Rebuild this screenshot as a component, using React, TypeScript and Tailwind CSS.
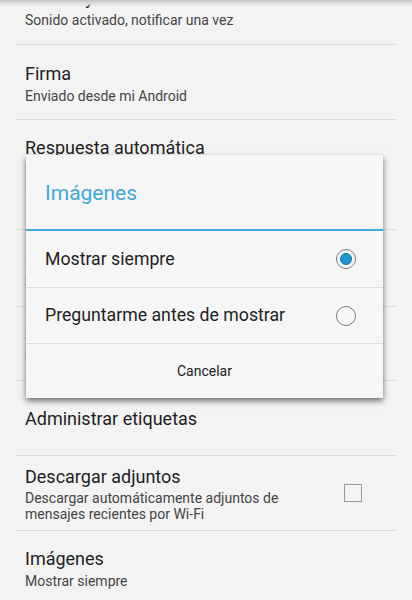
import React from "react";

const font = { fontFamily: "Roboto, 'Noto Sans', sans-serif" };

function Divider() {
  return <div className="mx-[16px] h-px bg-[#dcdcdc]" />;
}

function Row({ title, sub, right, h = 74, pt = 3 }: { title: string; sub?: string[]; right?: React.ReactNode; h?: number; pt?: number }) {
  return (
    <div className="flex items-center pl-[25px] pr-[49px]" style={{ height: h, paddingTop: pt }}>
      <div className="flex-1 flex flex-col">
        <div className="text-[18px] leading-[24px] text-[#1e1e1e]">{title}</div>
        {sub && sub.length === 1 && <div className="text-[14px] leading-[20px] text-[#444]">{sub[0]}</div>}
        {sub && sub.length > 1 && (
          <div className="text-[14px] leading-[16px] text-[#444] mt-[1px]">
            {sub.map(s => (
              <div key={s}>{s}</div>
            ))}
          </div>
        )}
      </div>
      {right}
    </div>
  );
}

function Radio({ on }: { on: boolean }) {
  return (
    <div className="w-[20px] h-[20px] rounded-full border border-[#7a7a7a] bg-[#f7f7f7] flex items-center justify-center">
      {on && <div className="w-[12px] h-[12px] rounded-full bg-[#1f97cf] border border-[#16759f]" />}
    </div>
  );
}

export default function App() {
  return (
    <div className="relative w-[412px] h-[600px] overflow-hidden bg-[#f3f3f3]" style={font}>
      <div className="-mt-[31px]">
        <Row title="Sonido y vibración" sub={["Sonido activado, notificar una vez"]} h={75} />
        <Divider />
        <Row title="Firma" sub={["Enviado desde mi Android"]} pt={4} />
        <Divider />
        <div className="h-[109px] pl-[25px] pt-[16px]">
          <div className="text-[18px] leading-[24px] text-[#1e1e1e]">Respuesta automática</div>
          <div className="text-[14px] leading-[16px] text-[#444] mt-[1px]">
            <div>Desactivada</div>
            <div>lnicio: no configurado</div>
          </div>
        </div>
        <Divider />
        <Row title="Notificaciones de etiquetas" sub={["Sincronizar"]} h={76} />
        <Divider />
        <Row title="Sincronizar mensajes" sub={["Últimos 30 días"]} h={73} />
        <Divider />
        <Row title="Administrar etiquetas" h={74} pt={2} />
        <Divider />
        <Row
          title="Descargar adjuntos"
          sub={["Descargar automáticamente adjuntos de", "mensajes recientes por Wi-Fi"]}
          h={74}
          pt={0}
          right={<div className="w-[18px] h-[18px] border border-[#9a9a9a] mr-[1px]" />}
        />
        <Divider />
        <Row title="Imágenes" sub={["Mostrar siempre"]} pt={1} />
      </div>

      <div className="absolute top-0 left-0 right-0 h-[7px] bg-gradient-to-b from-[#c2c2c2] via-[#e0e0e0] to-transparent" />

      <div className="absolute left-[26px] top-[155px] w-[357px] bg-[#f6f6f6] shadow-[0_3px_6px_rgba(0,0,0,0.55)]">
        <div className="h-[74px] flex items-center pl-[19px] pt-[4px] text-[21px] text-[#3fa9d6]">Imágenes</div>
        <div className="h-[2px] bg-[#45acd9]" />
        <div className="h-[56px] flex items-center justify-between pl-[19px] pr-[27px] text-[17.7px] text-[#1e1e1e]">
          <span>Mostrar siempre</span>
          <Radio on />
        </div>
        <div className="h-px bg-[#dedede]" />
        <div className="h-[55px] flex items-center justify-between pl-[19px] pr-[27px] text-[17.7px] text-[#1e1e1e]">
          <span>Preguntarme antes de mostrar</span>
          <Radio on={false} />
        </div>
        <div className="h-px bg-[#dedede]" />
        <div className="h-[54px] flex items-center justify-center text-[14px] text-[#222]">Cancelar</div>
      </div>
    </div>
  );
}
